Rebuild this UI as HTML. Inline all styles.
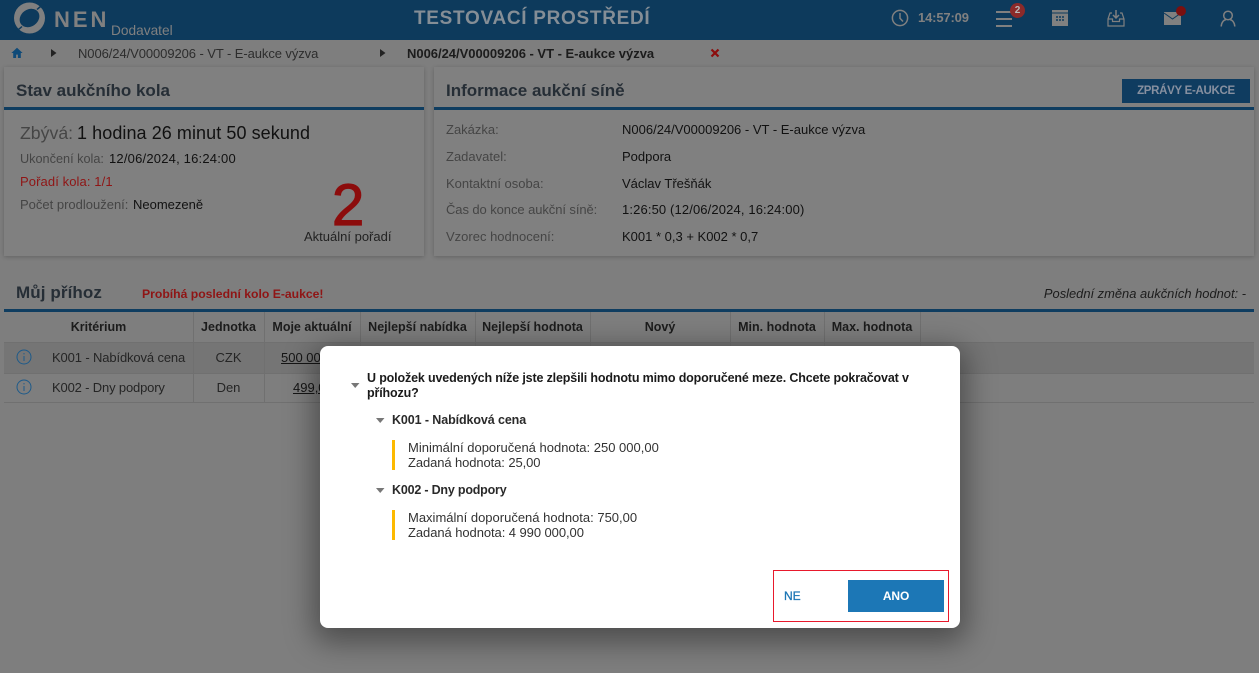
<!DOCTYPE html>
<html lang="cs"><head><meta charset="utf-8"><title>NEN</title>
<style>
html,body{margin:0;padding:0;width:1259px;height:673px;overflow:hidden;background:#7e7e7e;font-family:"Liberation Sans",sans-serif;font-size:13px;color:#111}
.t{position:absolute;white-space:nowrap;line-height:16px}
.b{font-weight:bold}
.abs{position:absolute}
.g{color:#454545}
.h{font-size:17px;font-weight:bold;color:#262e36;line-height:20px}
.th{font-weight:bold;text-align:center;color:#1c1c1c}
.line{position:absolute;background:#0f3d60}
.v{position:absolute;width:1px;background:#707070}
.hl{position:absolute;height:1px;background:#707070}
</style></head><body>

<div class="abs" style="left:0;top:0;width:1259px;height:40px;background:#0d3a5c"></div>
<svg class="abs" style="left:12px;top:0" width="36" height="36" viewBox="0 0 36 36">
<circle cx="17.500" cy="18" r="15.500" fill="#808080"/>
<ellipse cx="17.500" cy="18" rx="10.500" ry="8.500" transform="rotate(-35 17.500 18)" fill="#0d3a5c"/>
<path d="M25 9.500 C28 6.500 31 5 34 4.500" fill="none" stroke="#0d3a5c" stroke-width="1.500"/>
<path d="M10 26.500 C7 29.500 4 31 1 31.500" fill="none" stroke="#0d3a5c" stroke-width="1.500"/>
</svg>
<div class="t b" style="left:54px;top:7px;font-size:22px;line-height:26px;letter-spacing:3px;color:#808080">NEN</div>
<div class="t" style="left:111px;top:23px;font-size:13.700px;color:#808080">Dodavatel</div>
<div class="t b" style="left:414px;top:8px;font-size:19px;line-height:22px;letter-spacing:.7px;color:#858e96">TESTOVACÍ PROSTŘEDÍ</div>

<svg class="abs" style="left:890px;top:8px" width="20" height="20" viewBox="0 0 20 20" fill="none" stroke="#808080" stroke-width="1.500"><circle cx="10" cy="10" r="7.600"/><path d="M10 5v5.300l3 3.200"/></svg>
<div class="t b" style="left:918px;top:10px;color:#808080;letter-spacing:-.15px">14:57:09</div>
<div class="abs" style="left:996px;top:11px;width:16px;height:2px;background:#808080"></div>
<div class="abs" style="left:996px;top:18px;width:16px;height:2px;background:#808080"></div>
<div class="abs" style="left:996px;top:25px;width:16px;height:2px;background:#808080"></div>
<div class="abs b" style="left:1010px;top:3px;width:15px;height:15px;border-radius:50%;background:#8b2a2a;color:#b9b9b9;font-size:10px;line-height:15px;text-align:center">2</div>
<svg class="abs" style="left:1051px;top:9px" width="18" height="18" viewBox="0 0 18 18"><path d="M1 1h16v16H1z" fill="#808080"/><path d="M1 4h16" stroke="#0d3a5c" stroke-width="1"/><path d="M5 8h2M8 8h2M11 8h2M5 11h2M8 11h2M11 11h2" stroke="#0d3a5c" stroke-width="1.400"/></svg>
<svg class="abs" style="left:1107px;top:9px" width="18" height="18" viewBox="0 0 18 18" fill="none" stroke="#808080" stroke-width="1.200"><path d="M5 4H3L1 10v7h16v-7l-2-6h-2"/><path d="M1 10h4.500v2.500h7V10H17"/><path d="M9 1v8M6 6l3 3 3-3" stroke-width="1.500"/></svg>
<svg class="abs" style="left:1163px;top:11px" width="19" height="15" viewBox="0 0 19 15"><path d="M1 1h17v13H1z" fill="#808080"/><path d="M1 2l8.500 6L18 2" fill="none" stroke="#0d3a5c" stroke-width="1"/></svg>
<div class="abs" style="left:1176px;top:6px;width:10px;height:10px;border-radius:50%;background:#7a0f0f"></div>
<svg class="abs" style="left:1220px;top:10px" width="16" height="17" viewBox="0 0 16 17" fill="none" stroke="#808080" stroke-width="1.500"><circle cx="8" cy="5.500" r="4.300"/><path d="M1.200 16.500C1.500 12 4 9.800 6 9.600M14.800 16.500C14.500 12 12 9.800 10 9.600"/></svg>

<svg class="abs" style="left:11px;top:47px" width="12" height="12" viewBox="0 0 12 12"><path d="M6 .8L.4 6h1.800v5h2.900V7.600h1.800V11h2.900V6h1.800z" fill="#0f4a78"/></svg>
<svg class="abs" style="left:51px;top:49px" width="6" height="8"><path d="M0 0l5.500 4L0 8z" fill="#222"/></svg>
<div class="t" style="left:78px;top:46px;color:#2d2d2d;letter-spacing:-.08px">N006/24/V00009206 - VT - E-aukce výzva</div>
<svg class="abs" style="left:380px;top:49px" width="6" height="8"><path d="M0 0l5.500 4L0 8z" fill="#222"/></svg>
<div class="t b" style="left:407px;top:46px;color:#1c1c1c;letter-spacing:-.02px">N006/24/V00009206 - VT - E-aukce výzva</div>
<svg class="abs" style="left:710px;top:48px" width="10" height="10" viewBox="0 0 10 10"><path d="M1.500 1.500l7 7M8.500 1.500l-7 7" stroke="#8c0c0c" stroke-width="2.200"/></svg>

<div class="abs" style="left:4px;top:67px;width:420px;height:189px;background:#808080;box-shadow:0 1px 4px rgba(0,0,0,.22)"></div>
<div class="abs" style="left:434px;top:67px;width:820px;height:189px;background:#808080;box-shadow:0 1px 4px rgba(0,0,0,.22)"></div>
<div class="t h" style="left:16px;top:81px">Stav aukčního kola</div>
<div class="line" style="left:4px;top:107px;width:420px;height:3px"></div>
<div class="t h" style="left:446px;top:81px">Informace aukční síně</div>
<div class="line" style="left:434px;top:107px;width:820px;height:3px"></div>
<div class="abs b" style="left:1122px;top:79px;width:128px;height:24px;background:#0f3c60;color:#8790a0;font-size:11.500px;letter-spacing:-.3px;line-height:24px;text-align:center">ZPRÁVY E-AUKCE</div>

<div class="t g" style="left:20px;top:123px;font-size:17.700px;line-height:20px">Zbývá:</div>
<div class="t" style="left:77px;top:123px;font-size:18px;letter-spacing:.07px;line-height:20px;color:#111">1 hodina 26 minut 50 sekund</div>
<div class="t g" style="left:20px;top:151px;font-size:12.700px">Ukončení kola:</div>
<div class="t" style="left:109px;top:151px;letter-spacing:.2px">12/06/2024, 16:24:00</div>
<div class="t" style="left:20px;top:174px;color:#8f1515;letter-spacing:.1px">Pořadí kola: 1/1</div>
<div class="t g" style="left:20px;top:197px;font-size:13px">Počet prodloužení:</div>
<div class="t" style="left:133px;top:197px">Neomezeně</div>
<div class="t" style="left:332px;top:176px;font-size:58px;line-height:60px;color:#8c0c0c;-webkit-text-stroke:1.200px #8c0c0c">2</div>
<div class="t" style="left:304px;top:229px;color:#222">Aktuální pořadí</div>

<div class="t g" style="left:446px;top:122px">Zakázka:</div>
<div class="t" style="left:622px;top:122px">N006/24/V00009206 - VT - E-aukce výzva</div>
<div class="t g" style="left:446px;top:149px">Zadavatel:</div>
<div class="t" style="left:622px;top:149px">Podpora</div>
<div class="t g" style="left:446px;top:176px">Kontaktní osoba:</div>
<div class="t" style="left:622px;top:176px">Václav Třešňák</div>
<div class="t g" style="left:446px;top:202px;letter-spacing:-.08px">Čas do konce aukční síně:</div>
<div class="t" style="left:622px;top:202px;letter-spacing:.13px">1:26:50 (12/06/2024, 16:24:00)</div>
<div class="t g" style="left:446px;top:229px">Vzorec hodnocení:</div>
<div class="t" style="left:622px;top:229px">K001 * 0,3 + K002 * 0,7</div>

<div class="t h" style="left:16px;top:283px;letter-spacing:.1px">Můj příhoz</div>
<div class="t b" style="left:142px;top:286px;font-size:12.200px;color:#8f1515">Probíhá poslední kolo E-aukce!</div>
<div class="t" style="right:13px;top:286px;font-size:12.900px;font-style:italic;color:#1c1c1c">Poslední změna aukčních hodnot: -</div>
<div class="line" style="left:4px;top:309px;width:1250px;height:3px"></div>

<div class="abs" style="left:4px;top:343px;width:1250px;height:30px;background:#757575"></div>
<div class="hl" style="left:4px;top:342px;width:1250px"></div>
<div class="hl" style="left:4px;top:373px;width:1250px"></div>
<div class="hl" style="left:4px;top:402px;width:1250px"></div>
<div class="v" style="left:193px;top:312px;height:91px"></div>
<div class="v" style="left:264px;top:312px;height:91px"></div>
<div class="v" style="left:360px;top:312px;height:91px"></div>
<div class="v" style="left:475px;top:312px;height:91px"></div>
<div class="v" style="left:590px;top:312px;height:91px"></div>
<div class="v" style="left:730px;top:312px;height:91px"></div>
<div class="v" style="left:824px;top:312px;height:91px"></div>
<div class="v" style="left:920px;top:312px;height:91px"></div>

<div class="t th" style="left:4px;width:189px;top:319px;font-size:12.500px">Kritérium</div>
<div class="t th" style="left:193px;width:71px;top:319px;font-size:12.500px">Jednotka</div>
<div class="t th" style="left:264px;width:96px;top:319px;font-size:12.500px">Moje aktuální</div>
<div class="t th" style="left:360px;width:115px;top:319px;font-size:12.500px">Nejlepší nabídka</div>
<div class="t th" style="left:475px;width:115px;top:319px;font-size:12.500px">Nejlepší hodnota</div>
<div class="t th" style="left:590px;width:140px;top:319px;font-size:12.500px">Nový</div>
<div class="t th" style="left:730px;width:94px;top:319px;font-size:12.500px">Min. hodnota</div>
<div class="t th" style="left:824px;width:96px;top:319px;font-size:12.500px">Max. hodnota</div>

<svg class="abs" style="left:16px;top:349px" width="16" height="16" viewBox="0 0 16 16" fill="none" stroke="#1d5a8a" stroke-width="1"><circle cx="8" cy="8" r="7"/><path d="M8 7v5M8 4v1.400"/></svg>
<div class="t" style="left:52px;top:350px;color:#252525;letter-spacing:-.13px">K001 - Nabídková cena</div>
<div class="t" style="left:193px;width:71px;text-align:center;top:350px;color:#252525">CZK</div>
<div class="t" style="left:281px;top:350px;text-decoration:underline;color:#151515">500 000,00</div>
<svg class="abs" style="left:16px;top:379px" width="16" height="16" viewBox="0 0 16 16" fill="none" stroke="#1d5a8a" stroke-width="1"><circle cx="8" cy="8" r="7"/><path d="M8 7v5M8 4v1.400"/></svg>
<div class="t" style="left:52px;top:380px;color:#252525;letter-spacing:-.16px">K002 - Dny podpory</div>
<div class="t" style="left:193px;width:71px;text-align:center;top:380px;color:#252525">Den</div>
<div class="t" style="left:293px;top:380px;text-decoration:underline;color:#151515">499,00</div>

<div class="abs" style="left:320px;top:346px;width:640px;height:282px;background:#fff;border-radius:8px;box-shadow:0 8px 30px 6px rgba(0,0,0,.4)"></div>
<svg class="abs" style="left:351px;top:383px" width="9" height="5"><path d="M0 0h8.500L4.200 5z" fill="#777"/></svg>
<div class="t b" style="left:367px;top:370px;font-size:12.500px;letter-spacing:-.15px;color:#1a1a1a">U položek uvedených níže jste zlepšili hodnotu mimo doporučené meze. Chcete pokračovat v</div>
<div class="t b" style="left:367px;top:385px;font-size:12.500px;letter-spacing:-.15px;color:#1a1a1a">příhozu?</div>
<svg class="abs" style="left:376px;top:418px" width="9" height="5"><path d="M0 0h8.500L4.200 5z" fill="#777"/></svg>
<div class="t" style="left:392px;top:412px;font-weight:bold;font-size:12.500px;letter-spacing:-.1px;color:#2a2a2a">K001 - Nabídková cena</div>
<div class="abs" style="left:392px;top:440px;width:3px;height:30px;background:#fdb900"></div>
<div class="t" style="left:408px;top:440px;color:#333">Minimální doporučená hodnota: 250 000,00</div>
<div class="t" style="left:408px;top:455px;color:#333;letter-spacing:-.1px">Zadaná hodnota: 25,00</div>
<svg class="abs" style="left:376px;top:488px" width="9" height="5"><path d="M0 0h8.500L4.200 5z" fill="#777"/></svg>
<div class="t" style="left:392px;top:482px;font-weight:bold;font-size:12.500px;letter-spacing:-.2px;color:#2a2a2a">K002 - Dny podpory</div>
<div class="abs" style="left:392px;top:510px;width:3px;height:30px;background:#fdb900"></div>
<div class="t" style="left:408px;top:510px;color:#333">Maximální doporučená hodnota: 750,00</div>
<div class="t" style="left:408px;top:525px;color:#333;letter-spacing:-.07px">Zadaná hodnota: 4 990 000,00</div>

<div class="abs" style="left:773px;top:570px;width:174px;height:50px;border:1px solid #e8192c"></div>
<div class="t" style="left:784px;top:588px;font-size:12px;color:#1d76b5;-webkit-text-stroke:.3px #1d76b5">NE</div>
<div class="abs b" style="left:848px;top:580px;width:96px;height:32px;background:#1c77b6;color:#fff;font-size:12px;letter-spacing:-.1px;line-height:32px;text-align:center">ANO</div>
</body></html>
